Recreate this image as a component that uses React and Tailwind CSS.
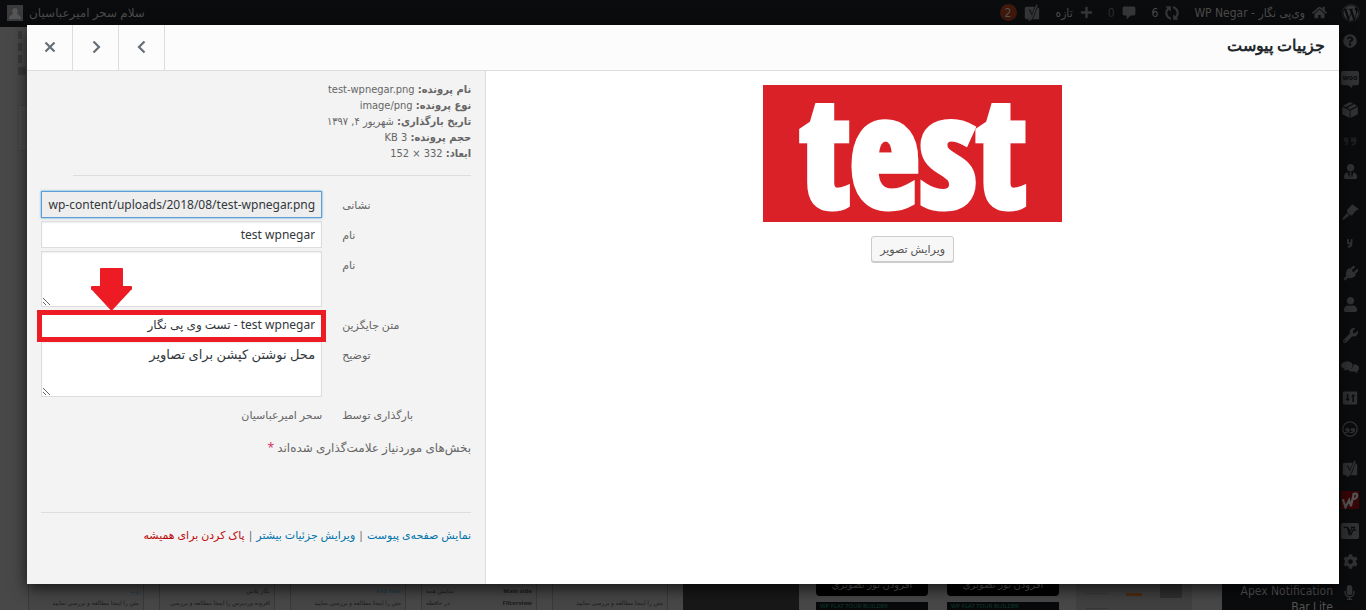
import {
  FaWordpress, FaHome, FaSyncAlt, FaPlus, FaYoast, FaQuestionCircle, FaUserTie, FaUser,
  FaPlug, FaWrench, FaCog, FaMicrophone,
} from "react-icons/fa";

const Svg = ({ children, className = "" }) => (
  <svg viewBox="0 0 20 20" className={"size-[18px] " + className} fill="currentColor" aria-hidden="true">{children}</svg>
);

const WooIcon = () => (
  <Svg>
    <path d="M2 1h16a2 2 0 0 1 2 2v12a2 2 0 0 1-2 2h-5l-1 3-4-3H2a2 2 0 0 1-2-2V3a2 2 0 0 1 2-2z" />
    <text x="10" y="11" textAnchor="middle" fontSize="8" fontWeight="700" className="fill-[#0b0c0e]">woo</text>
  </Svg>
);
const BoxIcon = () => (
  <Svg>
    <path d="M10 1l3.3 1.7-8 4.2L2 5.2z M14.6 3.3L18 5.2 10 9.4 6.7 7.7z M1.3 6.3l8.2 4.2V19L1.3 14.7z M18.7 6.3l-8.2 4.2V19l8.2-4.3z" />
  </Svg>
);
const QuoteIcon = () => (
  <Svg className="text-[#1c1e20]">
    <path d="M3 6h5v5c0 2-1 4-4 4v-2c1 0 2-1 2-2H3z M11 6h6v5c0 2-1 4-5 4v-2c2 0 3-1 3-2h-4z" />
  </Svg>
);
const BrushIcon = () => (
  <Svg>
    <path d="M11 3l1.5-1.5L20 7l-4 2-3.5 4.500-2 .5-4-4 .5-2.500z M6.500 11l2.800 2.800C7 15 4 19 1.500 18.700 0 18 4.500 14 6.500 11z" />
  </Svg>
);
const ScriptYIcon = () => (
  <Svg className="p-[3px]">
    <path d="M5 4l3-1v5c0 2 2 2 3 0V4l3-1v8c0 4-2 7-6 7-3 0-3-3 0-4l3-1v-1c-3 1-6 0-6-3z" />
  </Svg>
);
const PlugIcon = () => (
  <Svg className="rotate-45">
    <path d="M6 1.500a1.300 1.300 0 0 1 2.600 0V6h2.800V1.500a1.300 1.300 0 0 1 2.600 0V6h1.500v2c0 3-1.500 5.500-4 6.300V19H8.500v-4.700C6 13.500 4.500 11 4.500 8V6H6z" />
  </Svg>
);
const BubblesIcon = () => (
  <Svg>
    <path d="M7 4c4 0 6 2 6 4.500S11 13 7 13l-4 1 1-2C1 11 0 10 0 8.500 0 6 3 4 7 4z M14 7c4 0 6 2 6 4 0 1.500-1 3-2 3.500l.5 2.500-3.500-2c-4 .5-6.500-.5-7-2 4 0 6-2 6-6z" />
  </Svg>
);
const SlidersIcon = () => (
  <Svg className="p-px">
    <path fillRule="evenodd" d="M2 2h16a1 1 0 0 1 1 1v14a1 1 0 0 1-1 1H2a1 1 0 0 1-1-1V3a1 1 0 0 1 1-1z M6 5v6H4l3 3 3-3H8V5z M11 8l3-3 3 3h-2v7h-2V8z" />
  </Svg>
);
const RingIcon = () => (
  <Svg>
    <circle cx="10" cy="10" r="8" fill="none" stroke="currentColor" strokeWidth="1.500" />
    <text x="10" y="12" textAnchor="middle" fontSize="10" fontWeight="700">وو</text>
  </Svg>
);
const YoastIcon = () => (
  <Svg>
    <path d="M4 3h9l-3 8-2-5H6l3.500 8c0 2-1 3-3 3H4a2 2 0 0 1-2-2V5a2 2 0 0 1 2-2z M16 4a2 2 0 0 1 2 1v12h-8c1-1 2-2 2.500-3.500z" />
    <path d="M5.500 6l4 8M15.500 1l-5 13c-.8 2.500-2 4-4.500 4" fill="none" stroke="currentColor" strokeWidth="1.800" />
  </Svg>
);
const RedWpIcon = () => (
  <Svg>
    <rect width="20" height="20" className="fill-[#3a0507]" />
    <path d="M2 9l3 9 4-8 2 7 3-13M13 4c6-4 7 4 1 5" fill="none" stroke="#555" strokeWidth="2.500" />
  </Svg>
);
const WBoxIcon = () => (
  <Svg>
    <rect width="20" height="18" y="1" rx="2" />
    <path d="M3 6h4l2 8 3-7 M8 6l3 8 4-8h-4 M13 9h4" fill="none" stroke="#0b0c0e" strokeWidth="1.200" />
  </Svg>
);
const CommentIcon = () => (
  <svg viewBox="0 0 20 20" className="size-[16px] text-[#343638]" fill="currentColor" aria-hidden="true">
    <path d="M4 2h12a2 2 0 0 1 2 2v7a2 2 0 0 1-2 2h-4l-5 5v-5H4a2 2 0 0 1-2-2V4a2 2 0 0 1 2-2z" />
  </svg>
);

const menuGroups = [
  [WooIcon, BoxIcon, QuoteIcon, FaUserTie],
  [BrushIcon, ScriptYIcon, PlugIcon, FaUser, FaWrench, BubblesIcon, SlidersIcon, RingIcon],
  [YoastIcon, RedWpIcon, WBoxIcon, FaCog],
];

function AdminBar() {
  return (
    <header dir="rtl" className="flex h-[27px] items-center justify-between bg-[#0b0c0e] pb-0.5 pr-[6px] pl-[7px] text-[#4b4b4b]">
      <nav className="flex items-center font-['DejaVu_Sans_Condensed',sans-serif] text-[12px]">
        <FaWordpress className="size-[18px] text-[#343638]" />
        <a href="#site" className="mr-[15px] flex items-center gap-[7px]">
          <FaHome className="size-[15px] text-[#343638]" />
          <span>وی‌پی نگار - WP Negar</span>
        </a>
        <a href="#updates" className="mr-[15px] flex items-center gap-[7px]">
          <FaSyncAlt className="size-[14px] rotate-90 text-[#343638]" />6
        </a>
        <a href="#comments" className="mr-[15px] flex items-center gap-[6px] text-[#2c2e30]">
          <CommentIcon />0
        </a>
        <a href="#new" className="mr-[15px] flex items-center gap-[7px]">
          <FaPlus className="size-[13px] text-[#343638]" />تازه
        </a>
        <a href="#seo" className="mr-[15px] flex items-center gap-[6px]">
          <span className="text-[#343638]"><YoastIcon /></span>
          <span className="flex size-[17px] items-center justify-center rounded-full bg-[#40180c] text-[#555]">2</span>
        </a>
      </nav>
      <a href="#profile" className="flex items-center gap-[6px] text-[12px]">
        سلام سحر امیرعباسیان
        <svg viewBox="0 0 16 16" className="size-4" aria-hidden="true">
          <rect width="16" height="16" fill="#3b3b3b" />
          <path d="M8 3a3 3 0 0 1 2 5c0 2 4 2 4 6H2c0-4 4-4 4-6a3 3 0 0 1 2-5z" fill="#565656" />
        </svg>
      </a>
    </header>
  );
}

function Widget({ title, note }) {
  return (
    <div className="flex w-[116px] shrink-0 flex-col justify-end border-x border-[#3a3a3a] text-[6px] leading-[10px] text-[#1c1c1c]">
      <div className="h-[12px] px-1 text-[#1f3a48]">{title}</div>
      <div className="h-[13px] overflow-hidden bg-[#464646] px-1">{note}</div>
    </div>
  );
}

function TourCard() {
  return (
    <div className="flex w-[116px] shrink-0 flex-col justify-end px-[2px]">
      <div className="rounded-b-[4px] bg-black pb-[4px] text-center text-[10px] leading-4 text-[#5a5a5a]">افزودن تور تصویری</div>
      <div className="mt-[6px] h-[9px] bg-[#08090a] px-1 text-[6px] leading-[9px] text-[#0d3b2c]" dir="ltr">WP FLAT TOUR BUILDER</div>
    </div>
  );
}

function Backdrop() {
  return (
    <div dir="ltr" className="flex min-h-screen flex-col bg-[#484848]">
      <AdminBar />
      <div className="flex flex-1">
        <div className="flex min-w-0 flex-1 flex-col justify-between">
          <div className="pt-1 pl-[18px]">
            <div className="flex w-2 flex-col gap-1">
              <i className="h-2 w-1 bg-[#37393b]" />
              <i className="h-2 w-1 bg-[#37393b]" />
              <i className="h-2 w-1 bg-[#37393b]" />
              <i className="h-2 w-2 bg-[#37393b]" />
            </div>
            <div className="mt-[30px] h-[46px] w-[40px] border border-[#434343] bg-[#4c4c4c]" />
          </div>
          <div className="flex h-[40px] gap-[15px] overflow-hidden pl-[28px]">
            <Widget title={<p dir="rtl">وب</p>} note={<p dir="rtl">متن را اینجا مطالعه و بررسی نمایید</p>} />
            <Widget title={<p dir="rtl" className="text-[#1c1c1c]">نگار پلاس</p>} note={<p dir="rtl">افزونه وردپرس را اینجا مطالعه و بررسی</p>} />
            <Widget title={<p className="text-right">Add New</p>} note={<p dir="rtl">متن را اینجا مطالعه و بررسی نمایید</p>} />
            <Widget
              title={<p className="flex justify-between text-[#1c1c1c]"><span>نمایش همه</span><b>Main side</b></p>}
              note={<p className="flex justify-between"><span>در حافظه</span><b>Filterview</b></p>}
            />
            <Widget title="" note={<p dir="rtl">متن را اینجا مطالعه و بررسی نمایید</p>} />
            <div className="w-[116px] shrink-0 bg-[#181818]" />
            <TourCard />
            <TourCard />
            <div className="flex w-[116px] shrink-0 items-end justify-between bg-[#414141] px-[10px] pb-[2px]">
              <div className="h-[16px] w-[22px] border-y border-[#373737]" />
              <div className="mb-[13px] h-[3px] w-[16px] bg-[#4f2c10]" />
              <div className="mb-[11px] h-[16px] w-[22px] bg-[#303030]" />
            </div>
          </div>
        </div>
        <aside className="flex w-[144px] shrink-0 flex-col bg-[#0b0c0e] text-[#303234]">
          <div className="flex h-[27px] items-center justify-end pr-[9px]"><FaQuestionCircle className="size-[14px]" /></div>
          {menuGroups.map((group, i) => (
            <div key={i} className="mt-[9px]">
              {group.map((Icon, j) => (
                <div key={j} className="flex h-[31px] items-center justify-end pr-[7px]">
                  <span className="flex w-[18px] justify-center"><Icon className="size-[15px]" /></span>
                </div>
              ))}
            </div>
          ))}
          <a href="#apex" dir="rtl" className="flex h-[34px] items-start gap-[9px] pr-[9px] pt-[6px] font-['DejaVu_Sans_Condensed',sans-serif] text-[12px] leading-4 text-[#555]">
            <FaMicrophone className="mt-[2px] size-[15px] shrink-0 text-[#303234]" />
            <span className="w-[104px]">Apex Notification Bar Lite</span>
          </a>
        </aside>
      </div>
    </div>
  );
}

function Row({ id, label, children }) {
  return (
    <div className="flex gap-5">
      <label htmlFor={id} className="w-[30%] shrink-0 text-left leading-[27px]">{label}</label>
      <div className="relative min-w-0 flex-1">{children}</div>
    </div>
  );
}

const fieldBase = "block w-full border border-[#ddd] bg-white px-[6px] text-right text-[#32373c] outline-none shadow-[inset_0_1px_2px_rgba(0,0,0,0.07)]";

const navIcon = "size-[16px] fill-none stroke-[#666e76] stroke-[2.200]";
const navButton = "flex w-[46px] items-center justify-center border-r border-[#ddd] pb-px";

export default function App() {
  return (
    <div dir="rtl" lang="fa" className="relative h-screen overflow-hidden font-['Noto_Sans','DejaVu_Sans',sans-serif] text-[11px] text-[#666]">
      <Backdrop />
      <div role="dialog" aria-labelledby="dialog-title" className="absolute inset-x-[27px] top-[25px] bottom-[26px] flex flex-col bg-white shadow-[0_5px_15px_rgba(0,0,0,0.7)]">
        <div className="flex h-[46px] shrink-0 justify-between border-b border-[#ddd] bg-[#fcfcfc]">
          <h1 id="dialog-title" className="pr-[14px] font-['Liberation_Sans',sans-serif] text-[16px] leading-[42px] font-bold text-[#23282d]">جزییات پیوست</h1>
          <div className="flex">
            <button aria-label="قبلی" className={navButton}><svg viewBox="0 0 16 16" className={navIcon}><path d="M10.500 2.500L5 8l5.500 5.500" /></svg></button>
            <button aria-label="بعدی" className={navButton}><svg viewBox="0 0 16 16" className={navIcon}><path d="M5.500 2.500L11 8l-5.500 5.500" /></svg></button>
            <button aria-label="بستن" className={navButton}><svg viewBox="0 0 16 16" className={navIcon}><path d="M3.500 3.500l9 9M12.500 3.500l-9 9" /></svg></button>
          </div>
        </div>
        <div className="flex min-h-0 flex-1">
          <main className="flex flex-1 flex-col items-center gap-[14px] pt-[14px]">
            <svg viewBox="0 0 299 137" className="h-[137px] w-[299px] overflow-visible" role="img" aria-label="test">
              <rect width="299" height="137" fill="#da2128" />
              <text x="150" y="122" direction="ltr" textAnchor="middle" fontSize="152" fontWeight="700" fill="#fff" stroke="#fff" strokeWidth="7" className="font-['Open_Sans_Condensed','Roboto_Condensed',sans-serif]">test</text>
            </svg>
            <button className="h-[26px] rounded-[3px] border border-[#ccc] bg-[#f7f7f7] px-2 text-[11px] text-[#555] shadow-[0_1px_0_#ccc]">ویرایش تصویر</button>
          </main>
          <aside className="w-[35%] border-r border-[#ddd] bg-[#f3f3f3] px-[14px] pt-[11px]">
            <div className="ml-8 border-b border-[#ddd] pb-[13px] font-['DejaVu_Sans_Condensed',sans-serif] leading-4">
              <div><b>نام پرونده:</b> test-wpnegar.png</div>
              <div><b>نوع پرونده:</b> image/png</div>
              <div><b>تاریخ بارگذاری:</b> شهریور ۴, ۱۳۹۷</div>
              <div><b>حجم پرونده:</b> 3 KB</div>
              <div><b>ابعاد:</b> 332 × 152</div>
            </div>
            <div className="mt-[15px] flex flex-col gap-[3px]">
              <Row id="url" label="نشانی">
                <input id="url" dir="ltr" readOnly defaultValue="wp-content/uploads/2018/08/test-wpnegar.png" className={fieldBase + " h-[27px] border-[#5b9dd9]! bg-[#eee]! text-[12px] shadow-[0_0_2px_rgba(30,140,190,0.8)]!"} />
              </Row>
              <Row id="title" label="نام">
                <input id="title" defaultValue="test wpnegar" className={fieldBase + " h-[27px] text-[12px]"} />
              </Row>
              <Row id="caption" label="نام">
                <textarea id="caption" className={fieldBase + " mb-px h-[56px] py-1 text-[13px]"} />
              </Row>
              <Row id="alt" label="متن جایگزین">
                <input id="alt" dir="rtl" defaultValue="test wpnegar - تست وی پی نگار" className={fieldBase + " h-[27px] text-[12px]"} />
                <div className="pointer-events-none absolute -inset-x-1 -top-px -bottom-1 z-10 border-[5px] border-[#ed1c24]" />
                <svg viewBox="0 0 41 44" className="absolute bottom-[26px] left-[50px] z-10 h-[44px] w-[41px]" fill="#ed1c24" aria-hidden="true">
                  <path d="M10 0h21a1 1 0 0 1 1 1v17h7a2 2 0 0 1 1 4L20.500 43 1 22a2 2 0 0 1 1-4h7V1a1 1 0 0 1 1-1z" />
                </svg>
              </Row>
              <Row id="desc" label="توضیح">
                <textarea id="desc" defaultValue="محل نوشتن کپشن برای تصاویر" className={fieldBase + " mb-px h-[56px] py-1 text-[13px] leading-4"} />
              </Row>
              <Row label="بارگذاری توسط"><span className="leading-[27px]">سحر امیرعباسیان</span></Row>
            </div>
            <p className="mt-2 text-[12px] leading-6">بخش‌های موردنیاز علامت‌گذاری شده‌اند <span className="text-[#d6336c]">*</span></p>
            <div className="mt-[52px] border-t border-[#ddd] pt-[14px] leading-4">
              <a href="#view" className="text-[#0073aa]">نمایش صفحه‌ی پیوست</a> |{" "}
              <a href="#edit" className="text-[#0073aa]">ویرایش جزئیات بیشتر</a> |{" "}
              <button className="text-[#bc0b0b]">پاک کردن برای همیشه</button>
            </div>
          </aside>
        </div>
      </div>
    </div>
  );
}
